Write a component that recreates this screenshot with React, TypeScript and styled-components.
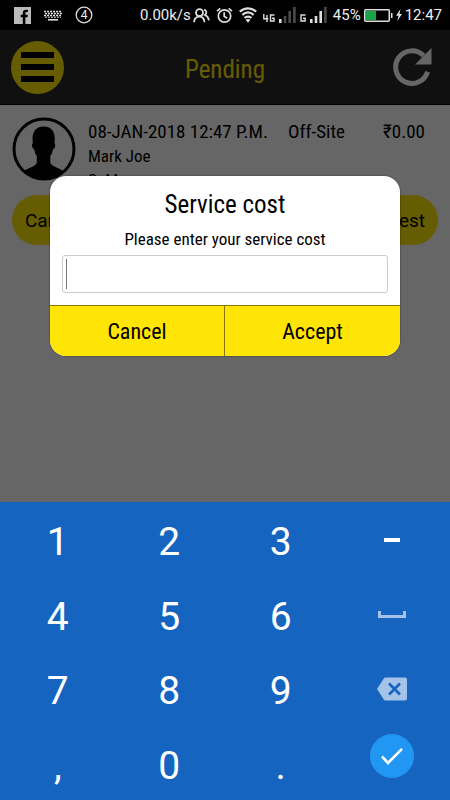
import React from "react";
import styled, { createGlobalStyle } from "styled-components";

const YELLOW = "#ffe505";
const CONDENSED = '"Roboto Condensed", "Liberation Sans Narrow", Roboto, sans-serif';

const GlobalStyle = createGlobalStyle`
  *, *::before, *::after { box-sizing: border-box; }
  body { margin: 0; background: #fff; }
  button, input { font: inherit; color: inherit; }
  button { border: 0; padding: 0; background: none; cursor: pointer; }
`;

const Screen = styled.div`
  min-height: 100vh;
  display: flex;
  flex-direction: column;
  font-family: Roboto, sans-serif;
  color: #000;
`;

const StatusBar = styled.div`
  height: 30px;
  padding: 0 8px 0 14px;
  background: #000;
  color: #eee;
  display: flex;
  align-items: center;
  justify-content: space-between;
  font-size: 15px;
  line-height: 30px;
`;

const StatusGroup = styled.div<{ $gap: number }>`
  display: flex;
  align-items: center;
  gap: ${(p) => p.$gap}px;
  svg { display: block; flex: none; }
`;

const Page = styled.main`
  position: relative;
  flex: 1;
  background: #fff;
`;

const Header = styled.header`
  height: 75px;
  padding: 0 18px 0 11px;
  display: grid;
  grid-template-columns: 54px 1fr 47px;
  align-items: center;
  background: #2a2a2a;
  border-bottom: 1px solid #000;
`;

const MenuButton = styled.button`
  width: 53px;
  height: 53px;
  border-radius: 50%;
  background: ${YELLOW};
  display: flex;
  flex-direction: column;
  align-items: center;
  justify-content: center;
  gap: 6px;
`;

const MenuLine = styled.span`
  width: 33px;
  height: 6px;
  background: #000;
`;

const PageTitle = styled.h1`
  margin: 0;
  padding-top: 6px;
  text-align: center;
  font: 400 25px/32px ${CONDENSED};
  color: ${YELLOW};
`;

const RefreshButton = styled.button`
  display: flex;
  justify-content: flex-end;
  svg { display: block; }
`;

const Job = styled.section`
  padding: 12px 12px 0;
`;

const JobSummary = styled.div`
  display: flex;
  gap: 12px;
  height: 78px;
`;

const JobText = styled.div`
  flex: 1;
  padding: 3px 13px 0 0;
  font: 400 19px/24px ${CONDENSED};
`;

const JobHead = styled.div`
  display: flex;
  justify-content: space-between;
`;

const JobPlace = styled.span`
  margin-right: 18px;
`;

const JobLine = styled.div`
  font-size: 17px;
`;

const JobActions = styled.div`
  display: flex;
  gap: 12px;
`;

const Pill = styled.button<{ $align: string }>`
  flex: 1;
  height: 50px;
  padding: 0 13px;
  border-radius: 25px;
  background: ${YELLOW};
  font-size: 19px;
  text-align: ${(p) => p.$align};
`;

const Scrim = styled.div`
  position: absolute;
  inset: 0;
  display: flex;
  align-items: center;
  justify-content: center;
  padding: 0 50px;
  background: rgba(0, 0, 0, 0.6);
`;

const Dialog = styled.form`
  width: 100%;
  max-width: 420px;
  border-radius: 16px;
  overflow: hidden;
  background: #fff;
  box-shadow: 0 0 2px rgba(0, 0, 0, 0.5);
  font-family: ${CONDENSED};
`;

const DialogBody = styled.div`
  padding: 13px 12px 12px;
  display: flex;
  flex-direction: column;
  text-align: center;
`;

const DialogTitle = styled.h2`
  margin: 0 0 7px;
  font-size: 25px;
  line-height: 32px;
  font-weight: 400;
`;

const DialogLabel = styled.label`
  margin-bottom: 5px;
  font-size: 17px;
  line-height: 22px;
`;

const FieldFrame = styled.div`
  height: 38px;
  padding: 3px;
  border: 1px solid #ccc;
  border-radius: 3px;
  display: flex;
`;

const Field = styled.input`
  width: 100%;
  border: 0;
  border-left: 1px solid #777;
  padding: 0 4px;
  outline: none;
  background: none;
  caret-color: transparent;
`;

const DialogActions = styled.div`
  display: grid;
  grid-template-columns: 1fr 1fr;
  border-top: 1px solid #857800;
`;

const DialogButton = styled.button`
  height: 50px;
  background: ${YELLOW};
  font-size: 22px;
  &:first-child { border-right: 1px solid #857800; }
`;

const Keypad = styled.div`
  height: 298px;
  padding: 0 2px;
  display: grid;
  grid-template: repeat(4, 1fr) / repeat(4, 1fr);
  background: #1565c0;
  color: #fff;
`;

const Key = styled.button`
  display: flex;
  align-items: center;
  justify-content: center;
  padding-top: 6px;
  font-size: 39px;
  line-height: 46px;
  svg { display: block; }
`;

const IconKey = styled(Key)`
  padding-top: 2px;
`;

const DoneKey = styled(Key)`
  padding: 0 0 14px;
`;

const DoneCircle = styled.span`
  width: 44px;
  height: 44px;
  border-radius: 50%;
  background: #2196f3;
  display: flex;
  align-items: center;
  justify-content: center;
`;

const FacebookIcon = () => (
  <svg width="17" height="17" viewBox="0 0 17 17">
    <path fill="#bbb" d="M0 0h17v17H0z" />
    <path fill="#000" d="M8.8 17v-6.7H6.7V7.7h2.1V6c0-2.2 1.3-3.3 3.2-3.3h1.9V5h-1.3c-1 0-1.2.5-1.2 1.2v1.5h2.4l-.3 2.6h-2.1V17z" />
  </svg>
);

const KeyboardIcon = () => (
  <svg width="18" height="11" viewBox="0 0 18 11" stroke="#ddd" fill="none">
    <path d="M0 1.5h18M1 3.5h17M0 5.5h18" strokeWidth="1.3" strokeDasharray="2 1" />
    <path d="M1 7.2h16" strokeWidth="1" strokeDasharray="2 1" />
    <path d="M4 9.8h10" strokeWidth="1.6" />
  </svg>
);

const CountIcon = () => (
  <svg width="18" height="18" viewBox="0 0 18 18">
    <circle cx="9" cy="9" r="7.8" fill="none" stroke="#ddd" strokeWidth="1.3" />
    <text x="9" y="13" textAnchor="middle" fill="#eee" fontSize="12" fontFamily="Roboto, sans-serif">4</text>
  </svg>
);

const PeopleIcon = () => (
  <svg width="17" height="15" viewBox="0 0 17 15" fill="none" stroke="#ddd" strokeWidth="1.8">
    <circle cx="6.5" cy="4.7" r="3.5" />
    <path d="M1 14.2c.2-3.4 2-5.4 5.5-5.9 3.1.5 4.8 2.5 5 5.9" />
    <path d="M11 1.6c2.6.3 3.2 3.8 1 5.4 2.1.8 3.5 2.5 3.9 5.3" />
  </svg>
);

const AlarmIcon = () => (
  <svg width="17" height="17" viewBox="0 0 17 17" fill="none" stroke="#ddd" strokeWidth="1.7">
    <circle cx="8.5" cy="9" r="6.2" />
    <path d="M1 4.2 4.3 1.3M12.7 1.3 16 4.2M8.2 5.2v4.1l2.9 2" />
  </svg>
);

const WifiIcon = () => (
  <svg width="18" height="16" viewBox="0 0 18 16" fill="none" stroke="#ddd" strokeWidth="2.2">
    <path d="M.8 4.6c4.8-4.3 11.6-4.3 16.4 0M3.3 7.8c3.5-3 7.9-3 11.4 0M5.5 10.9c2.2-1.7 4.8-1.7 7 0" />
    <path d="M9 15.8 6.5 12.8c1.5-1 3.5-1 5 0z" fill="#ddd" stroke="none" />
  </svg>
);

const NetFourIcon = () => (
  <svg width="12" height="14" viewBox="0 0 12 14" fill="none" stroke="#ddd" strokeWidth="1.4">
    <path d="M.8 6v4.8h4.5M4 7v7M11.5 7H7.5v6h3.6v-2.8H9" />
  </svg>
);

const NetGIcon = () => (
  <svg width="6" height="14" viewBox="0 0 6 14" fill="none" stroke="#ddd" strokeWidth="1.4">
    <path d="M5.5 7H1v6h4.2v-2.8H3" />
  </svg>
);

const SignalIcon = ({ level }: { level: number }) => (
  <svg width="17" height="16" viewBox="0 0 17 16">
    {[4, 7, 12, 16].map((h, i) => (
      <rect key={h} x={i * 4.7} y={16 - h} width="2.6" height={h} fill={i < level ? "#ddd" : "#4a4a4a"} />
    ))}
  </svg>
);

const BatteryIcon = () => (
  <svg width="29" height="13" viewBox="0 0 29 13">
    <rect x=".8" y=".8" width="24.5" height="11.4" rx="1" fill="none" stroke="#ddd" strokeWidth="1.6" />
    <path fill="#ddd" d="M27 4h1.5v5H27z" />
    <path fill="#18a548" d="M2 2h10v9H2z" />
  </svg>
);

const BoltIcon = () => (
  <svg width="6" height="12" viewBox="0 0 6 12">
    <path fill="#ddd" d="M4.5 0 0 6.7h2.5L1.2 12 6 5H3.5z" />
  </svg>
);

const RefreshIcon = () => (
  <svg width="39" height="38" viewBox="0 0 39 38">
    <path d="M34.6 23.8A16.3 16.3 0 1 1 30.6 7.7" fill="none" stroke="#fff" strokeWidth="5" />
    <path fill="#fff" d="M38.5 0v16.5H22z" />
  </svg>
);

const Avatar = () => (
  <svg width="64" height="64" viewBox="0 0 64 64" role="img" aria-label="Profile">
    <circle cx="32" cy="32" r="30" fill="none" stroke="#000" strokeWidth="3" />
    <path d="M12 54.5c3-4 9.5-3.4 12.8-8.5V39c-1.6-1.8-2.2-4.3-2.5-6.7-2.4-.5-3-5.5-1.4-6.1-1.7-10 2.2-16.7 10.8-16.7s12.4 6.7 10.7 16.7c1.5.7.9 5.5-1.5 6.1-.3 2.4-1 4.9-2.6 6.7v7c3.4 5.1 10 4.500 13 8.5A29 29 0 0 1 12 54.5z" />
  </svg>
);

const SpaceIcon = () => (
  <svg width="28" height="8" viewBox="0 0 28 8">
    <path d="M1.5 0v5.5h25V0" fill="none" stroke="#a5c3e8" strokeWidth="3" />
  </svg>
);

const DashIcon = () => (
  <svg width="16" height="4" viewBox="0 0 16 4">
    <path fill="#fff" d="M0 0h16v4H0z" />
  </svg>
);

const BackspaceIcon = () => (
  <svg width="30" height="24" viewBox="0 0 30 24">
    <path fill="#a5c3e8" d="M8.5.5H28a2 2 0 0 1 2 2v19a2 2 0 0 1-2 2H8.5a2 2 0 0 1-1.7-.9L0 12 6.800 1.4A2 2 0 0 1 8.5.5z" />
    <path d="m12 6.5 11 11m0-11-11 11" stroke="#1565c0" strokeWidth="2.6" />
  </svg>
);

const CheckIcon = () => (
  <svg width="22" height="18" viewBox="0 0 22 18">
    <path d="m1 9.5 6 6.5L21 1.8" fill="none" stroke="#fff" strokeWidth="2.6" />
  </svg>
);

const KEYS: { label: string; face: React.ReactNode; icon?: boolean }[] = [
  { label: "1", face: "1" },
  { label: "2", face: "2" },
  { label: "3", face: "3" },
  { label: "Minus", face: <DashIcon />, icon: true },
  { label: "4", face: "4" },
  { label: "5", face: "5" },
  { label: "6", face: "6" },
  { label: "Space", face: <SpaceIcon />, icon: true },
  { label: "7", face: "7" },
  { label: "8", face: "8" },
  { label: "9", face: "9" },
  { label: "Delete", face: <BackspaceIcon />, icon: true },
  { label: "Comma", face: "," },
  { label: "0", face: "0" },
  { label: "Period", face: "." },
];

export default function App() {
  return (
    <Screen>
      <GlobalStyle />
      <StatusBar>
        <StatusGroup $gap={13}>
          <FacebookIcon />
          <KeyboardIcon />
          <CountIcon />
        </StatusGroup>
        <StatusGroup $gap={6}>
          <StatusGroup $gap={2}>
            <span>0.00k/s</span>
            <PeopleIcon />
          </StatusGroup>
          <AlarmIcon />
          <WifiIcon />
          <StatusGroup $gap={4}>
            <NetFourIcon />
            <SignalIcon level={1} />
            <NetGIcon />
            <SignalIcon level={3} />
          </StatusGroup>
          <StatusGroup $gap={3}>
            <span>45%</span>
            <BatteryIcon />
            <BoltIcon />
            <span>12:47</span>
          </StatusGroup>
        </StatusGroup>
      </StatusBar>

      <Page>
        <Header>
          <MenuButton aria-label="Menu">
            <MenuLine />
            <MenuLine />
            <MenuLine />
          </MenuButton>
          <PageTitle>Pending</PageTitle>
          <RefreshButton aria-label="Refresh">
            <RefreshIcon />
          </RefreshButton>
        </Header>
        <Job>
          <JobSummary>
            <Avatar />
            <JobText>
              <JobHead>
                <span>08-JAN-2018 12:47 P.M.</span>
                <JobPlace>Off-Site</JobPlace>
                <span>₹0.00</span>
              </JobHead>
              <JobLine>Mark Joe</JobLine>
              <JobLine>S. M</JobLine>
            </JobText>
          </JobSummary>
          <JobActions>
            <Pill $align="left">Cancel</Pill>
            <Pill $align="right">Request</Pill>
          </JobActions>
        </Job>

        <Scrim>
          <Dialog role="dialog" aria-labelledby="cost-title" onSubmit={(e) => e.preventDefault()}>
            <DialogBody>
              <DialogTitle id="cost-title">Service cost</DialogTitle>
              <DialogLabel htmlFor="cost">Please enter your service cost</DialogLabel>
              <FieldFrame>
                <Field id="cost" type="text" inputMode="decimal" />
              </FieldFrame>
            </DialogBody>
            <DialogActions>
              <DialogButton type="button">Cancel</DialogButton>
              <DialogButton type="submit">Accept</DialogButton>
            </DialogActions>
          </Dialog>
        </Scrim>
      </Page>

      <Keypad>
        {KEYS.map((k) => {
          const Part = k.icon ? IconKey : Key;
          return (
            <Part key={k.label} type="button" aria-label={k.label}>
              {k.face}
            </Part>
          );
        })}
        <DoneKey type="button" aria-label="Done">
          <DoneCircle>
            <CheckIcon />
          </DoneCircle>
        </DoneKey>
      </Keypad>
    </Screen>
  );
}
